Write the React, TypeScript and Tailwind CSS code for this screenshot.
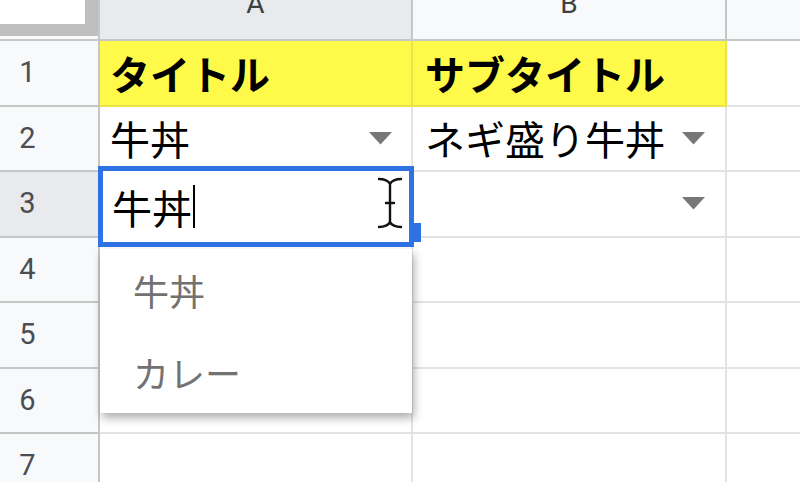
import React from 'react'

const jp = "font-['Noto_Sans_CJK_JP','Noto_Sans',sans-serif]"
const num = "font-['Roboto','Liberation_Sans',sans-serif]"

function Arrow() {
  return (
    <svg width="23" height="13" viewBox="0 0 23 13" className="shrink-0">
      <path d="M0 0 H23 L11.5 12.5 Z" fill="#777777" />
    </svg>
  )
}

function IBeam() {
  return (
    <svg width="26" height="52" viewBox="0 0 26 52" className="absolute left-[377px] top-[177px]">
      <g fill="none" strokeLinecap="round">
        <path
          d="M2 2 C7 2 12 4 13 7 C14 4 19 2 24 2 M13 7 V45 M2 50 C7 50 12 48 13 45 C14 48 19 50 24 50 M9 26 H17"
          stroke="#ffffff"
          strokeWidth="5"
        />
        <path
          d="M2 2 C7 2 12 4 13 7 C14 4 19 2 24 2 M13 7 V45 M2 50 C7 50 12 48 13 45 C14 48 19 50 24 50 M9 26 H17"
          stroke="#111111"
          strokeWidth="2.4"
        />
      </g>
    </svg>
  )
}

interface RowProps {
  n: number
  selected?: boolean
  a?: React.ReactNode
  b?: React.ReactNode
  yellow?: boolean
  arrowA?: boolean
  arrowB?: boolean
}

function Row({ n, selected, a, b, yellow, arrowA, arrowB }: RowProps) {
  const cell = yellow
    ? 'bg-[#fff94a] border-[#e9e44a]'
    : 'bg-white border-[#e2e3e3]'
  return (
    <div className="flex h-[65.5px] shrink-0">
      <div
        className={`w-[100px] shrink-0 border-r-2 border-b-2 border-[#c4c7c5] flex items-center ${
          selected ? 'bg-[#e8eaed]' : 'bg-[#f8f9fa]'
        }`}
      >
        <span className={`w-[55px] text-center text-[29px] text-[#4a4d52] ${num}`}>{n}</span>
      </div>
      <div className={`w-[313px] shrink-0 border-r-2 border-b-2 flex items-center pl-[10px] pr-[19px] ${cell}`}>
        <div className={`flex-1 overflow-hidden whitespace-nowrap text-[40px] text-black ${jp}`}>{a}</div>
        {arrowA && <Arrow />}
      </div>
      <div className={`w-[314px] shrink-0 border-r-2 border-b-2 flex items-center pl-[12px] pr-[20px] ${cell}`}>
        <div className={`flex-1 overflow-hidden whitespace-nowrap text-[40px] text-black ${jp}`}>{b}</div>
        {arrowB && <Arrow />}
      </div>
      <div className="flex-1 border-b-2 border-[#e2e3e3] bg-white" />
    </div>
  )
}

export default function App() {
  return (
    <div className="relative w-[800px] h-[482px] overflow-hidden bg-white flex flex-col">
      <div className="flex h-[41px] shrink-0 border-b-2 border-[#c4c7c5]">
        <div className="w-[100px] shrink-0 bg-[#f8f9fa] border-r-2 border-[#c4c7c5]">
          <div className="w-[98px] h-[36px] bg-white border-r-[13px] border-b-[12px] border-[#bfbfbf]" />
        </div>
        <div className="w-[313px] shrink-0 bg-[#e8eaed] border-r-2 border-[#c4c7c5] flex justify-center">
          <span className={`-mt-[10px] leading-none text-[28px] text-[#3c4043] ${num}`}>A</span>
        </div>
        <div className="w-[314px] shrink-0 bg-[#f8f9fa] border-r-2 border-[#c4c7c5] flex justify-center">
          <span className={`-mt-[10px] leading-none text-[28px] text-[#3c4043] ${num}`}>B</span>
        </div>
        <div className="flex-1 bg-[#f8f9fa]" />
      </div>

      <Row n={1} yellow a={<b>タイトル</b>} b={<b>サブタイトル</b>} />
      <Row n={2} a="牛丼" b="ネギ盛り牛丼" arrowA arrowB />
      <Row n={3} selected arrowB />
      <Row n={4} />
      <Row n={5} />
      <Row n={6} />
      <Row n={7} />

      {/* cell editor */}
      <div className="absolute left-[412px] top-[223px] w-[9px] h-[19px] bg-[#2f72e4]" />
      <div className="absolute left-[98px] top-[166px] w-[316px] h-[81px] border-[5px] border-[#2f72e4] bg-white flex items-center pl-[9px]">
        <span className={`text-[40px] text-black ${jp}`}>牛丼</span>
        <span className="inline-block w-[2px] h-[43px] bg-black ml-[1px]" />
      </div>
      <IBeam />

      {/* autocomplete list */}
      <div className="absolute left-[100px] top-[249px] w-[312px] h-[164px] bg-white shadow-[2px_5px_9px_rgba(0,0,0,0.32)] flex flex-col">
        <div className={`h-[82px] flex items-center pl-[33px] text-[36px] text-[#727272] ${jp}`}>牛丼</div>
        <div className={`h-[82px] flex items-center pl-[33px] text-[36px] text-[#727272] ${jp}`}>カレー</div>
      </div>
    </div>
  )
}
